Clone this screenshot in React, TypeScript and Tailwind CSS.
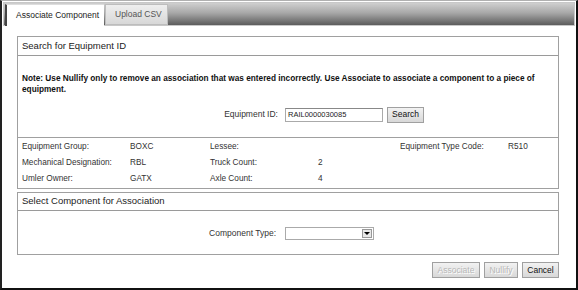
import React from "react";

const font = { fontFamily: '"Liberation Sans", Arial, sans-serif' };

function Btn({ children, disabled, w }: { children: React.ReactNode; disabled?: boolean; w: string }) {
  return (
    <div
      className={`${w} h-[16px] flex items-center justify-center text-[8.5px] border border-[#a0a0a0] bg-[linear-gradient(#f2f2f2,#d8d8d8)] ${
        disabled ? "text-[#b8b8b8] [text-shadow:1px_1px_0_#fff]" : "text-[#111]"
      }`}
    >
      {children}
    </div>
  );
}

export default function App() {
  return (
    <div
      style={font}
      className="w-[578px] h-[290px] bg-white border-t border-t-[#b0b0b0] border-l-2 border-r-2 border-b-2 border-l-[#222] border-r-[#111] border-b-[#111] flex flex-col overflow-hidden"
    >
      {/* tab bar */}
      <div className="mx-[1px] mt-[1px] h-[24px] flex items-end pl-[1px] border border-[#c8c8c8] bg-[linear-gradient(#cfcfcf,#a8a8a8_45%,#5c5c5c)]">
        <div className="w-[99px] h-[22px] bg-white border-l-2 border-l-[#444] border-t border-t-[#ddd] flex items-center pl-[9px] text-[8.5px] text-[#222] mb-[-1px]">
          Associate Component
        </div>
        <div className="ml-[1px] w-[63px] h-[21px] bg-[linear-gradient(#eeeeee,#d8d8d8)] border border-[#bdbdbd] flex items-center pl-[9px] text-[8.5px] text-[#555]">
          Upload CSV
        </div>
      </div>

      {/* panel 1 */}
      <div className="ml-[15px] mt-[10px] w-[542px] border border-[#a0a0a0]">
        <div className="h-[19px] border-b border-[#9a9a9a] flex items-center pl-[4px] text-[9.5px] text-[#222]">
          Search for Equipment ID
        </div>
        <div className="border-b border-[#a0a0a0] pt-[17px] pb-[14px]">
          <div className="pl-[4px] text-[8.25px] font-bold leading-[11px] text-[#111] whitespace-nowrap">
            Note: Use Nullify only to remove an association that was entered incorrectly. Use Associate to associate a component to a piece of
            <br />
            equipment.
          </div>
          <div className="mt-[11px] flex items-center h-[17px]">
            <div className="w-[260px] text-right text-[8.5px] text-[#333]">Equipment ID:</div>
            <div className="ml-[7px] w-[98px] h-[14px] border border-[#aaa] border-t-[#888] flex items-center pl-[2px] text-[7.5px] text-[#222]">
              RAIL0000030085
            </div>
            <div className="ml-[4px]">
              <Btn w="w-[37px]">Search</Btn>
            </div>
          </div>
        </div>
        <div className="pl-[4px] pt-[1px] pb-[1px] grid grid-cols-[108px_80px_108px_82px_108px_1fr] text-[8.25px] text-[#333]">
          {[
            ["Equipment Group:", "BOXC", "Lessee:", "", "Equipment Type Code:", "R510"],
            ["Mechanical Designation:", "RBL", "Truck Count:", "2", "", ""],
            ["Umler Owner:", "GATX", "Axle Count:", "4", "", ""],
          ].flatMap((row, i) =>
            row.map((c, j) => (
              <div key={`${i}-${j}`} className="h-[16px] flex items-center whitespace-nowrap">
                {c}
              </div>
            ))
          )}
        </div>
      </div>

      {/* panel 2 */}
      <div className="ml-[15px] mt-[3px] w-[542px] border border-[#a0a0a0]">
        <div className="h-[18px] border-b border-[#9a9a9a] flex items-center pl-[4px] text-[9.5px] text-[#222]">
          Select Component for Association
        </div>
        <div className="h-[43px] flex items-center pt-[1px]">
          <div className="w-[258px] text-right text-[8.5px] text-[#333]">Component Type:</div>
          <div className="ml-[9px] w-[89px] h-[13px] border border-[#aaa] flex justify-end items-stretch p-[1px]">
            <div className="w-[10px] bg-[#e8e8e8] border border-[#999] flex items-center justify-center">
              <div className="w-0 h-0 border-l-[3px] border-r-[3px] border-t-[3px] border-l-transparent border-r-transparent border-t-black" />
            </div>
          </div>
        </div>
      </div>

      {/* buttons */}
      <div className="ml-[15px] w-[542px] mt-[7px] flex justify-end gap-[4px]">
        <Btn w="w-[48px]" disabled>Associate</Btn>
        <Btn w="w-[34px]" disabled>Nullify</Btn>
        <Btn w="w-[37px]">Cancel</Btn>
      </div>
    </div>
  );
}
